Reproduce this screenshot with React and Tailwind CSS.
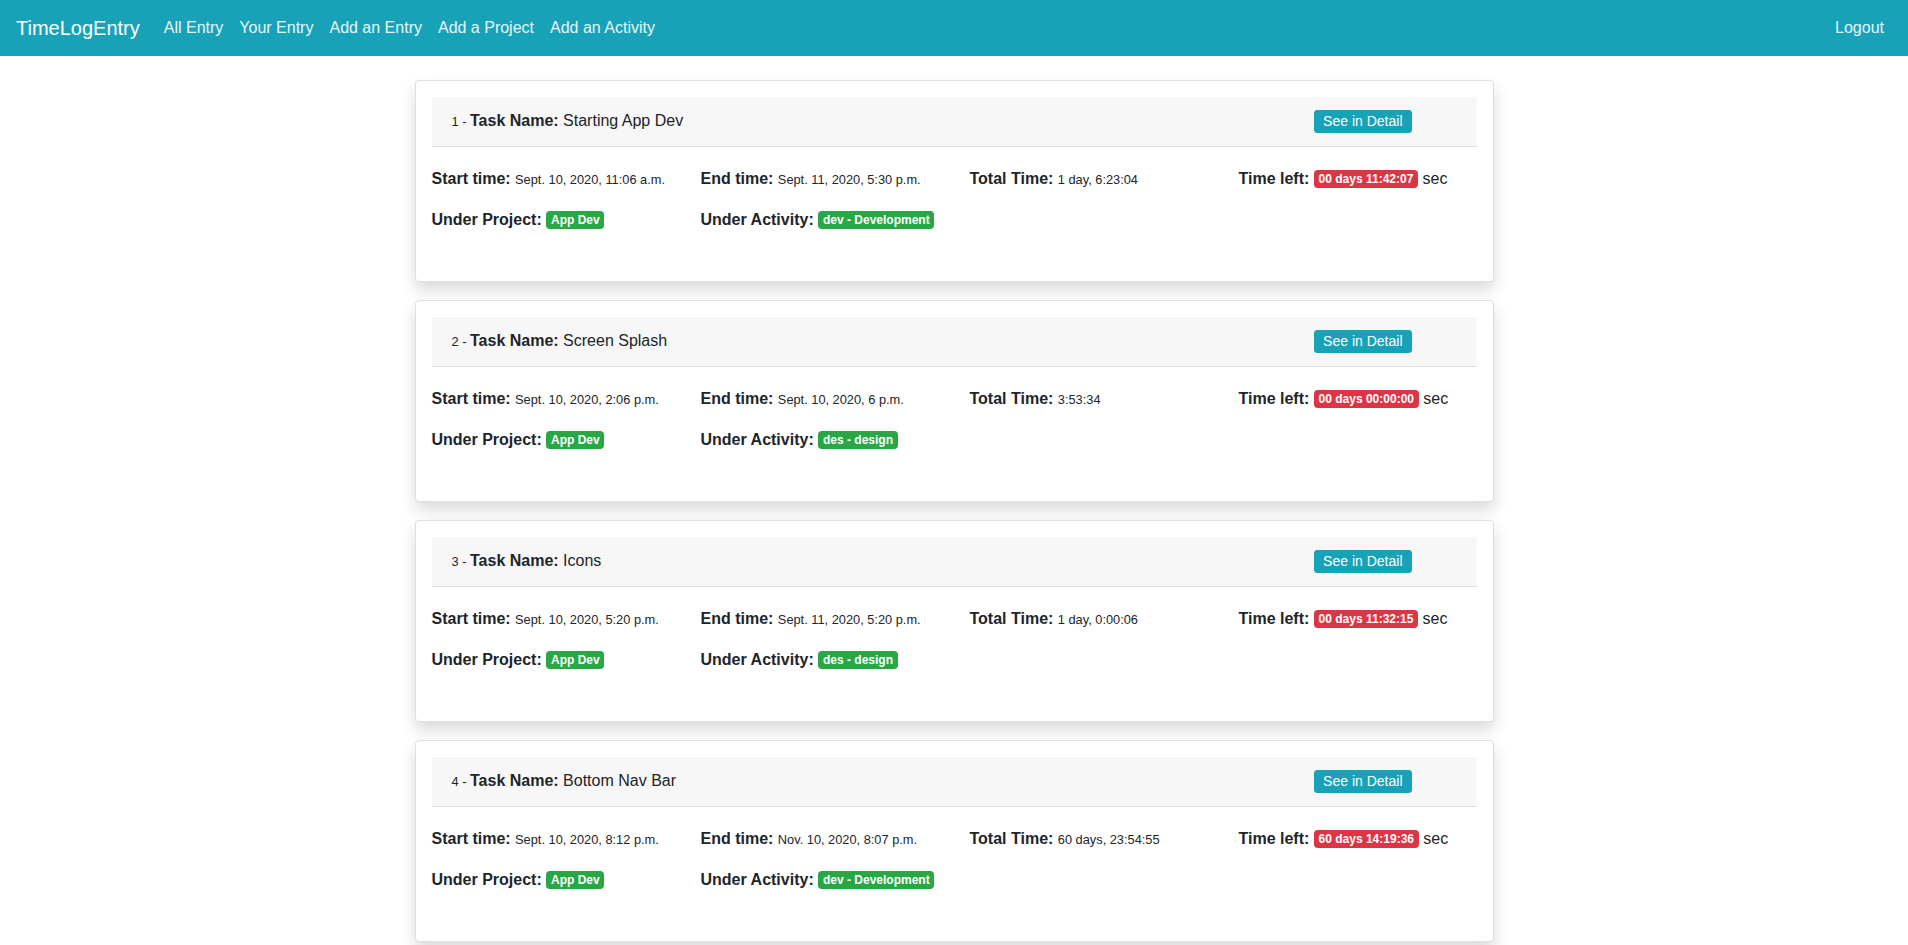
import React from "react";

const entries = [
  {
    id: 1,
    name: "Starting App Dev",
    start: "Sept. 10, 2020, 11:06 a.m.",
    end: "Sept. 11, 2020, 5:30 p.m.",
    total: "1 day, 6:23:04",
    left: "00 days 11:42:07",
    project: "App Dev",
    activity: "dev - Development",
  },
  {
    id: 2,
    name: "Screen Splash",
    start: "Sept. 10, 2020, 2:06 p.m.",
    end: "Sept. 10, 2020, 6 p.m.",
    total: "3:53:34",
    left: "00 days 00:00:00",
    project: "App Dev",
    activity: "des - design",
  },
  {
    id: 3,
    name: "Icons",
    start: "Sept. 10, 2020, 5:20 p.m.",
    end: "Sept. 11, 2020, 5:20 p.m.",
    total: "1 day, 0:00:06",
    left: "00 days 11:32:15",
    project: "App Dev",
    activity: "des - design",
  },
  {
    id: 4,
    name: "Bottom Nav Bar",
    start: "Sept. 10, 2020, 8:12 p.m.",
    end: "Nov. 10, 2020, 8:07 p.m.",
    total: "60 days, 23:54:55",
    left: "60 days 14:19:36",
    project: "App Dev",
    activity: "dev - Development",
  },
];

const navLinks = ["All Entry", "Your Entry", "Add an Entry", "Add a Project", "Add an Activity"];

const Badge = ({ color, children }) => (
  <span
    className={`inline-block ${color} text-white font-bold text-[12px] leading-none px-[4.8px] py-[3px] rounded-[4px] align-[1px]`}
  >
    {children}
  </span>
);

const EntryCard = ({ entry }) => (
  <div className="bg-white border border-[#dfdfdf] rounded-[4px] shadow-[0_8px_16px_rgba(0,0,0,0.15)] px-4 pt-4 mb-[18px] h-[202px]">
    {/* header */}
    <div className="bg-[#f7f7f7] border-b border-[#dfdfdf] h-[50px] pl-5 pr-[65px] flex items-center justify-between">
      <div className="text-[16px] leading-6">
        <span className="text-[12.8px]">{entry.id} - </span>
        <b>Task Name:</b> {entry.name}
      </div>
      <button className="bg-[#17a2b8] border border-[#17a2b8] text-white text-[14px] leading-[21px] px-2 rounded-[3px]">
        See in Detail
      </button>
    </div>

    {/* body */}
    <div className="grid grid-cols-[269px_269px_269px_269px] pt-5 gap-y-4 text-[16px] leading-6">
      <div>
        <b>Start time:</b> <span className="text-[12.8px]">{entry.start}</span>
      </div>
      <div>
        <b>End time:</b> <span className="text-[12.8px]">{entry.end}</span>
      </div>
      <div>
        <b>Total Time:</b> <span className="text-[12.8px]">{entry.total}</span>
      </div>
      <div className="whitespace-nowrap">
        <b>Time left:</b> <Badge color="bg-[#dc3545]">{entry.left}</Badge> sec
      </div>
      <div>
        <b>Under Project:</b> <Badge color="bg-[#28a745]">{entry.project}</Badge>
      </div>
      <div>
        <b>Under Activity:</b> <Badge color="bg-[#28a745]">{entry.activity}</Badge>
      </div>
    </div>
  </div>
);

const App = () => {
  return (
    <div className="min-h-screen bg-white text-[#212529] font-['Liberation_Sans',Arial,sans-serif]">
      <nav className="bg-[#17a2b8] h-14 px-4 flex items-center">
        <span className="text-white text-[20px] leading-[30px] mr-4">TimeLogEntry</span>
        {navLinks.map((link) => (
          <a key={link} className="text-[#e8f6f8] text-[16px] leading-6 px-2 cursor-pointer">
            {link}
          </a>
        ))}
        <a className="ml-auto text-[#e8f6f8] text-[16px] leading-6 px-2 cursor-pointer">Logout</a>
      </nav>

      <div className="w-[1079px] mx-auto pt-6">
        {entries.map((entry) => (
          <EntryCard key={entry.id} entry={entry} />
        ))}
      </div>
    </div>
  );
};

export default App;
